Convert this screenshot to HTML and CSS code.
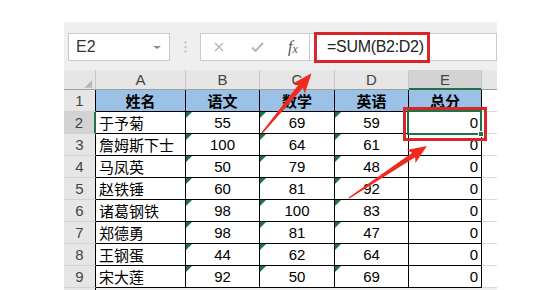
FILE: index.html
```html
<!DOCTYPE html>
<html lang="zh-CN">
<head>
    <meta charset="UTF-8">
    <title>SUM</title>
    <link rel="stylesheet" href="styles.css">
</head>
<body>
    <div class="sheet">
        <div class="formula-bar">
            <div class="name-box">E2<span class="caret"></span></div>
            <div class="grip">
                <svg width="3" height="12" viewBox="0 0 3 12"><circle cx="1.5" cy="1.5" r="1" fill="#b4b4b4"/><circle cx="1.5" cy="6" r="1" fill="#b4b4b4"/><circle cx="1.5" cy="10.5" r="1" fill="#b4b4b4"/></svg>
            </div>
            <div class="fx-buttons">
                <span class="btn-cancel"><svg width="10" height="10" viewBox="0 0 10 10"><path d="M1 1L9 9M9 1L1 9" stroke="#b8b8b8" stroke-width="1.4" fill="none"/></svg></span>
                <span class="btn-ok"><svg width="13" height="10" viewBox="0 0 13 10"><path d="M1 5.5L4.5 9L12 1" stroke="#b8b8b8" stroke-width="2" fill="none"/></svg></span>
                <span class="btn-fx"><i>f</i><i class="x">x</i></span>
            </div>
            <div class="formula-input">
                <span class="formula-mark">=SUM(B2:D2)</span>
            </div>
        </div>

        <div class="grid">
            <div class="hd corner"><svg width="32" height="20" viewBox="0 0 32 20"><polygon points="29,10 29,18 21,18" fill="#b8b8b8"/></svg></div>
            <div class="hd">A</div>
            <div class="hd">B</div>
            <div class="hd">C</div>
            <div class="hd">D</div>
            <div class="hd on">E</div>
            <div class="hd pad"></div>

            <div class="rh">1</div>
            <div class="c blue">姓名</div>
            <div class="c blue">语文</div>
            <div class="c blue">数学</div>
            <div class="c blue">英语</div>
            <div class="c blue">总分</div>
            <div class="c pad"></div>

            <div class="rh on">2</div>
            <div class="c name">于予菊</div>
            <div class="c t">55</div>
            <div class="c t">69</div>
            <div class="c t">59</div>
            <div class="c total sel">0<span class="handle"></span><span class="mark"></span></div>
            <div class="c pad"></div>

            <div class="rh">3</div>
            <div class="c name">詹姆斯下士</div>
            <div class="c t">100</div>
            <div class="c t">64</div>
            <div class="c t">61</div>
            <div class="c total">0</div>
            <div class="c pad"></div>

            <div class="rh">4</div>
            <div class="c name">马凤英</div>
            <div class="c t">50</div>
            <div class="c t">79</div>
            <div class="c t">48</div>
            <div class="c total">0</div>
            <div class="c pad"></div>

            <div class="rh">5</div>
            <div class="c name">赵铁锤</div>
            <div class="c t">60</div>
            <div class="c t">81</div>
            <div class="c t">92</div>
            <div class="c total">0</div>
            <div class="c pad"></div>

            <div class="rh">6</div>
            <div class="c name">诸葛钢铁</div>
            <div class="c t">98</div>
            <div class="c t">100</div>
            <div class="c t">83</div>
            <div class="c total">0</div>
            <div class="c pad"></div>

            <div class="rh">7</div>
            <div class="c name">郑德勇</div>
            <div class="c t">98</div>
            <div class="c t">81</div>
            <div class="c t">47</div>
            <div class="c total">0</div>
            <div class="c pad"></div>

            <div class="rh">8</div>
            <div class="c name">王钢蛋</div>
            <div class="c t">44</div>
            <div class="c t">62</div>
            <div class="c t">64</div>
            <div class="c total">0</div>
            <div class="c pad"></div>

            <div class="rh">9</div>
            <div class="c name">宋大莲</div>
            <div class="c t">92</div>
            <div class="c t">50</div>
            <div class="c t">69</div>
            <div class="c total">0</div>
            <div class="c pad"></div>
        </div>
    </div>

    <!-- annotation arrows -->
    <svg class="arrows" width="554" height="290" viewBox="0 0 554 290">
        <g transform="translate(262 133) rotate(-50.3)">
            <polygon points="0,-0.7 60.7,-2.7 57.7,-7.8 77.5,0 57.7,7.8 60.7,2.7 0,0.7" fill="#f02a1f"/>
        </g>
        <g transform="translate(349 198) rotate(-33.7)">
            <polygon points="0,-0.7 77.7,-2.7 74.7,-7.8 93.7,0 74.7,7.8 77.7,2.7 0,0.7" fill="#f02a1f"/>
        </g>
    </svg>
</body>
</html>
```

FILE: styles.css
```css
* {
    box-sizing: border-box;
}
body {
    margin: 0;
    width: 554px;
    height: 290px;
    overflow: hidden;
    position: relative;
    background: #fff;
    font-family: "Liberation Sans", "Noto Sans CJK SC", sans-serif;
    font-size: 15px;
    color: #000;
}
.sheet {
    margin: 22px 0 0 64px;
    width: 433px;
    background: #efefef;
}
.formula-bar {
    display: flex;
    align-items: center;
    height: 48px;
    padding: 11px 0 9px 4px;
}
.name-box {
    width: 102px;
    height: 28px;
    display: flex;
    align-items: center;
    padding-left: 7px;
    background: #fff;
    border: 1px solid #cacaca;
    font-size: 16px;
    color: #333;
}
.caret {
    margin-left: auto;
    margin-right: 8px;
    border-left: 4px solid transparent;
    border-right: 4px solid transparent;
    border-top: 3px solid #8a8a8a;
}
.grip {
    width: 30px;
    display: flex;
    justify-content: center;
}
.fx-buttons {
    width: 110px;
    height: 28px;
    display: flex;
    align-items: center;
    background: #fff;
    border: 1px solid #cacaca;
}
.fx-buttons span {
    display: flex;
    justify-content: center;
    align-items: center;
}
.btn-cancel {
    width: 36px;
}
.btn-ok {
    width: 40px;
}
.btn-fx {
    width: 32px;
    font-family: "Liberation Serif", serif;
    color: #555;
    font-size: 16px;
}
.btn-fx .x {
    font-size: 12px;
    margin-top: 4px;
}
.formula-input {
    flex: 1;
    height: 28px;
    display: flex;
    align-items: center;
    padding-left: 4px;
    background: #fff;
    border: 1px solid #cacaca;
    border-left: none;
}
.formula-mark {
    width: 116px;
    height: 31px;
    flex-shrink: 0;
    display: flex;
    align-items: center;
    padding-left: 10px;
    border: 3px solid #d9262c;
    font-size: 16px;
    letter-spacing: -0.3px;
    color: #222;
}
.grid {
    display: grid;
    grid-template-columns: 32px 90px 74px 75px 74px 73px 15px;
    grid-template-rows: 20px repeat(9, 22px) 10px;
}
.grid::after {
    content: "";
    grid-column: 1;
    background: #e6e6e6;
    border-right: 1px solid #000;
}
.hd {
    display: flex;
    align-items: center;
    justify-content: center;
    background: #e6e6e6;
    border-right: 1px solid #c8c8c8;
    border-bottom: 1px solid #9e9e9e;
    color: #444;
}
.hd.on {
    background: #d3d3d3;
    border-bottom: 2px solid #217346;
}
.hd.pad {
    border-right: none;
}
.corner {
    align-items: stretch;
    justify-content: stretch;
}
.rh {
    display: flex;
    align-items: center;
    justify-content: center;
    background: #e6e6e6;
    border-right: 1px solid #000;
    border-bottom: 1px solid #d2d2d2;
    color: #444;
}
.rh.on {
    background: #d3d3d3;
    border-right: 2px solid #217346;
}
.c {
    position: relative;
    display: flex;
    align-items: center;
    justify-content: center;
    white-space: nowrap;
    background: #fff;
    border-right: 1px solid #000;
    border-bottom: 1px solid #000;
}
.c.pad {
    border-right: none;
    border-bottom: 1px solid #d9d9d9;
}
.blue {
    background: #9bc2e6;
    font-weight: bold;
}
.name {
    justify-content: flex-start;
    padding-left: 3px;
}
.total {
    justify-content: flex-end;
    padding-right: 3px;
}
.t::before {
    content: "";
    position: absolute;
    top: 0;
    left: 0;
    border-top: 6px solid #217346;
    border-right: 6px solid transparent;
}
.sel::after {
    content: "";
    position: absolute;
    left: -2px;
    top: -2px;
    right: -1px;
    bottom: -2px;
    border: 2px solid #217346;
    z-index: 1;
}
.handle {
    position: absolute;
    right: -3px;
    bottom: -4px;
    width: 6px;
    height: 6px;
    background: #217346;
    border: 1px solid #fff;
    z-index: 2;
}
.mark {
    position: absolute;
    left: -6px;
    top: -5px;
    right: -6px;
    bottom: -8px;
    border: 3px solid #d9262c;
    z-index: 3;
}
.arrows {
    position: absolute;
    left: 0;
    top: 0;
    z-index: 4;
}
```
